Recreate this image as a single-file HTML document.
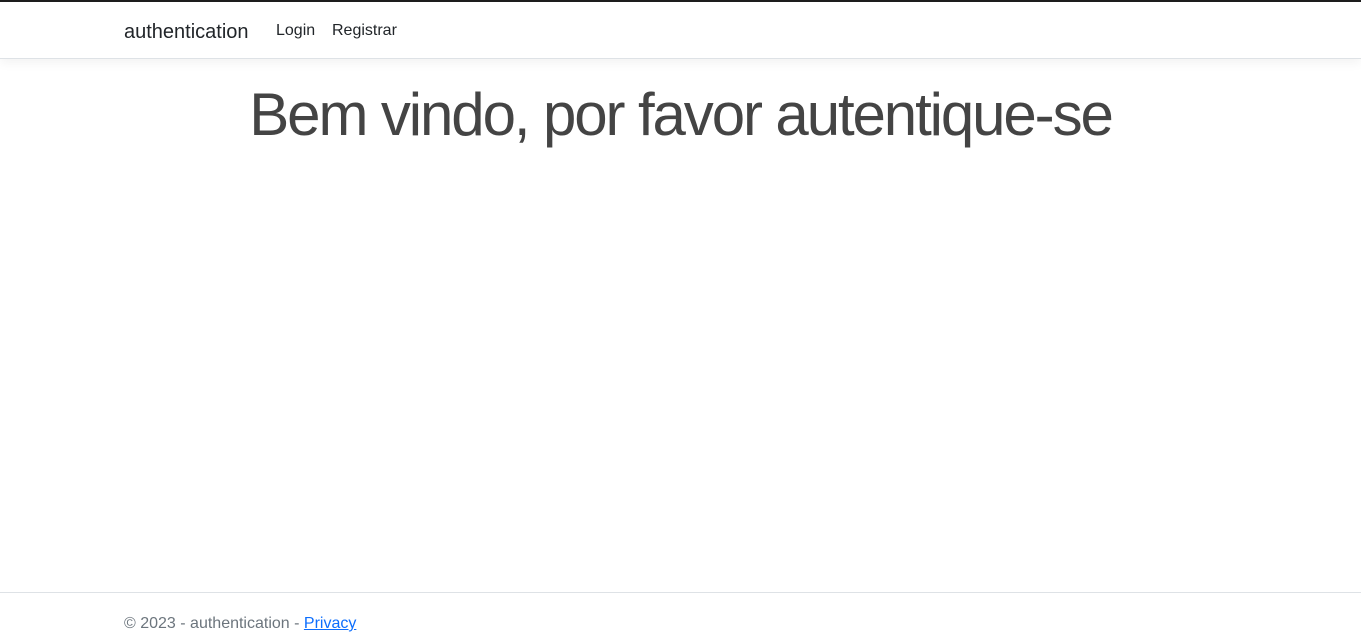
<!DOCTYPE html>
<html><head><meta charset="utf-8"><style>
body{margin:0;width:1361px;height:636px;position:relative;font-family:"Liberation Sans",sans-serif;background:#fff;color:#212529;overflow:hidden}
.top{position:absolute;top:0;left:0;right:0;height:2px;background:#1e1e1e}
.nav{position:absolute;top:2px;left:0;right:0;height:56px;border-bottom:1px solid #dee2e6;box-shadow:0 4px 10px rgba(0,0,0,.05)}
.brand{position:absolute;left:124px;top:19px;font-size:20px;color:#212529}
.l{position:absolute;top:20px;font-size:16px;color:#212529}
h1{position:absolute;top:82px;left:0;right:0;margin:0;text-align:center;font-weight:300;font-size:60px;letter-spacing:-2.1px;line-height:66px;color:#444}
.foot{position:absolute;top:592px;left:0;right:0;border-top:1px solid #dee2e6;height:44px}
.ft{position:absolute;left:124px;top:22px;font-size:16px;color:#6c757d}
.ft a{color:#0d6efd}
</style></head><body>
<div class="top"></div>
<div class="nav"><span class="brand">authentication</span><span class="l" style="left:276px">Login</span><span class="l" style="left:332px">Registrar</span></div>
<h1>Bem vindo, por favor autentique-se</h1>
<div class="foot"><div class="ft">© 2023 - authentication - <a href="#">Privacy</a></div></div>
</body></html>
